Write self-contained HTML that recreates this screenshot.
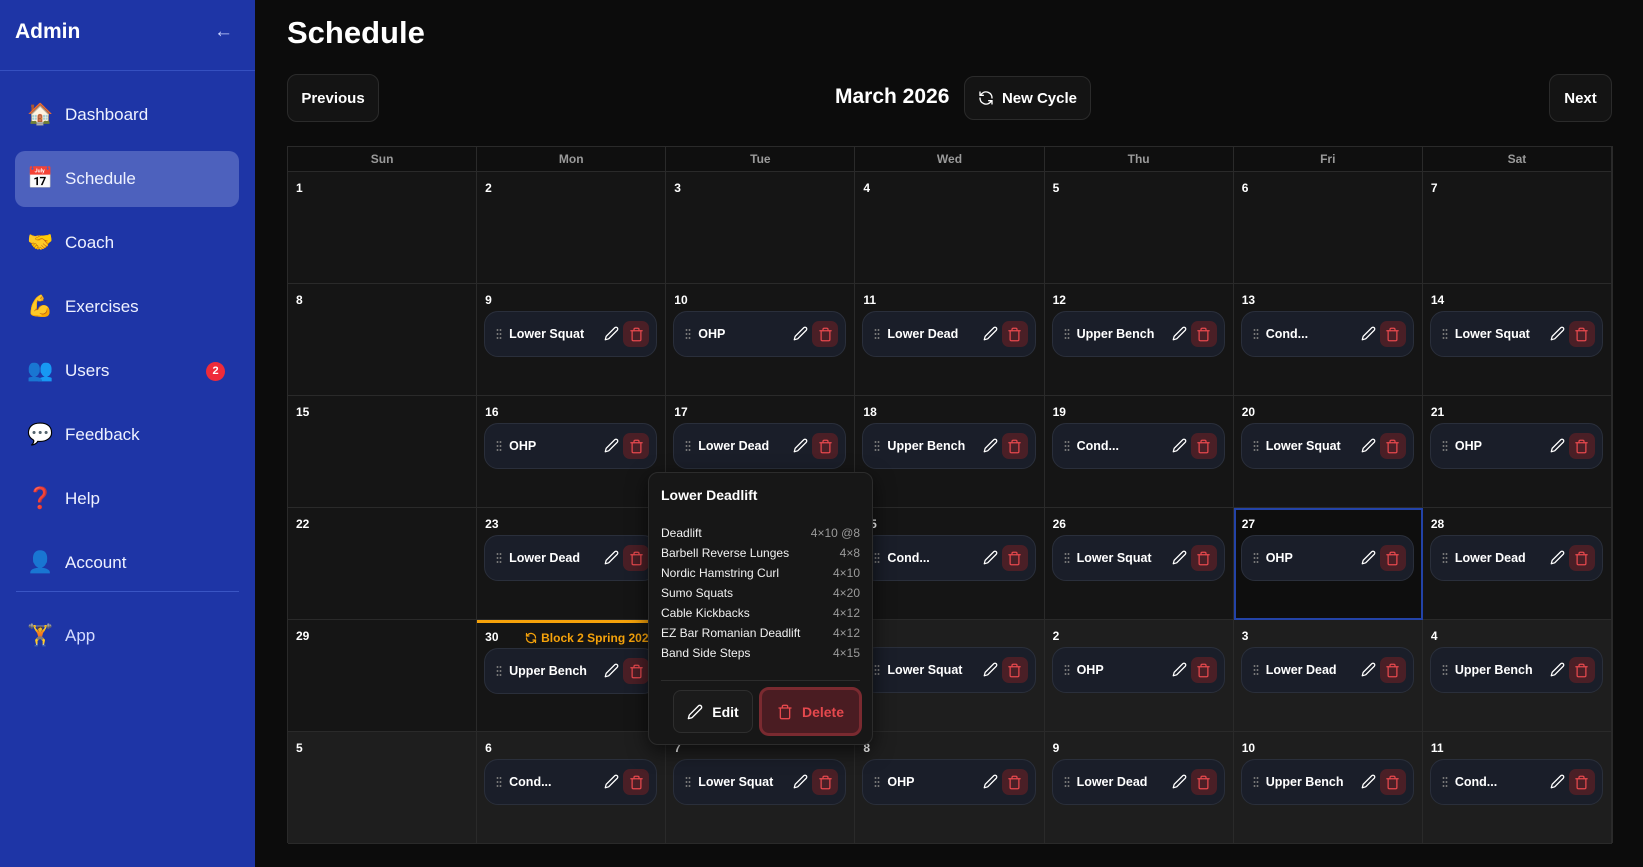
<!DOCTYPE html>
<html><head><meta charset="utf-8"><style>
*{box-sizing:border-box;margin:0;padding:0}
body{width:1643px;height:867px;overflow:hidden;background:#0c0c0c;font-family:"Liberation Sans","DejaVu Sans",sans-serif;color:#fff;position:relative}
.sb{position:absolute;left:0;top:0;width:255px;height:867px;background:#1e35a6}
.sb h1{position:absolute;left:15px;top:20px;font-size:21px;font-weight:bold}
.sb .arr{position:absolute;left:214px;top:21px;font-size:19px;color:#c9d2ff}
.sb .sep{position:absolute;left:0;width:255px;height:1px;background:#3550c0}
.nav{position:absolute;left:15px;width:224px;height:56px;border-radius:10px;font-size:17px;color:#eef1ff;display:flex;align-items:center;padding-left:12px}
.nav .ic{width:38px;font-size:21px;font-family:"Noto Color Emoji","DejaVu Sans",sans-serif}
.nav.act{background:#4d61bd}
.badge{position:absolute;right:14px;top:19px;width:19px;height:19px;border-radius:50%;background:#ef2b3a;color:#fff;font-size:11px;font-weight:bold;text-align:center;line-height:19px}
.title{position:absolute;left:287px;top:15px;font-size:31px;font-weight:bold}
.btn{position:absolute;border:1px solid #2b2b2b;background:#141414;border-radius:10px;font-size:15px;font-weight:bold;display:flex;align-items:center;justify-content:center;color:#fff}
.cal{position:absolute;left:287px;top:146px;width:1326px;height:697px;display:grid;grid-template-columns:repeat(7,1fr);grid-template-rows:25px repeat(6,112px);border:1px solid #2a2a2a;background:#141414}
.hd{background:#0f0f0f;border-right:1px solid #2a2a2a;border-bottom:1px solid #2a2a2a;color:#9a9a9a;font-size:12px;font-weight:bold;text-align:center;line-height:24px}
.c{position:relative;border-right:1px solid #2a2a2a;border-bottom:1px solid #2a2a2a;background:#151515}
.c.o{background:#1e1e1e}
.c.t{background:#0e0e0e;outline:2px solid #2343a8;outline-offset:-2px}
.c.blk{border-top:3px solid #f5a20a}
.n{position:absolute;left:8px;top:9px;font-size:12px;font-weight:bold;color:#fff}
.ch{position:absolute;left:7px;right:8px;top:27px;height:46px;border-radius:14px;background:#1a1e29;border:1px solid #2a2f3b}
.ch .d{position:absolute;left:11px;top:16px;width:6px;height:12px;background-image:radial-gradient(circle,#777 0.8px,transparent 1.1px);background-size:3px 4px}
.ch .l{position:absolute;left:24px;top:15px;font-size:12.5px;font-weight:bold;color:#fff;white-space:nowrap}
.ch .p{position:absolute;right:37px;top:14px}
.ch .tr{position:absolute;right:7px;top:9px;width:26px;height:26px;border-radius:7px;background:#4a1f26;display:flex;align-items:center;justify-content:center}
.blab{position:absolute;left:48px;top:8px;font-size:12px;font-weight:bold;color:#f5a20a;white-space:nowrap;display:flex;align-items:center;gap:4px}
.pop{position:absolute;left:648px;top:472px;width:225px;height:273px;background:#171717;border:1px solid #2c2c2c;border-radius:10px;box-shadow:0 6px 20px rgba(0,0,0,.6)}
.pop h3{position:absolute;left:12px;top:14px;font-size:14px;font-weight:bold}
.pop .rows{position:absolute;left:12px;right:12px;top:50px}
.pop .r{display:flex;justify-content:space-between;font-size:12px;height:20px;line-height:20px;color:#f2f2f2}
.pop .r span:last-child{color:#9a9a9a}
.pop .dv{position:absolute;left:12px;right:12px;top:207px;height:1px;background:#2c2c2c}
</style></head><body>
<div class="sb">
<h1>Admin</h1><div class="arr">←</div>
<div class="sep" style="top:70px"></div>
<div class="nav" style="top:87px"><span class="ic">🏠</span>Dashboard</div>
<div class="nav act" style="top:151px"><span class="ic">📅</span>Schedule</div>
<div class="nav" style="top:215px"><span class="ic">🤝</span>Coach</div>
<div class="nav" style="top:279px"><span class="ic">💪</span>Exercises</div>
<div class="nav" style="top:343px"><span class="ic">👥</span>Users<span class="badge">2</span></div>
<div class="nav" style="top:407px"><span class="ic">💬</span>Feedback</div>
<div class="nav" style="top:471px"><span class="ic">❓</span>Help</div>
<div class="nav" style="top:535px"><span class="ic">👤</span>Account</div>
<div class="sep" style="top:591px;left:16px;width:223px;background:#3a55c4"></div>
<div class="nav" style="top:608px;color:#d5dcff"><span class="ic">🏋️</span>App</div>
</div>

<div class="title">Schedule</div>
<div class="btn" style="left:287px;top:74px;width:92px;height:48px">Previous</div>
<div style="position:absolute;left:835px;top:85px;font-size:21px;font-weight:bold">March 2026</div>
<div class="btn" style="left:964px;top:76px;width:127px;height:44px;gap:8px"><svg width="16" height="16" viewBox="0 0 24 24" fill="none" stroke="#fff" stroke-width="2" stroke-linecap="round" stroke-linejoin="round"><path d="M21 12a9 9 0 0 0-15.5-6.3L3 8"/><path d="M3 3v5h5"/><path d="M3 12a9 9 0 0 0 15.5 6.3L21 16"/><path d="M16 16h5v5"/></svg>New Cycle</div>
<div class="btn" style="left:1549px;top:74px;width:63px;height:48px">Next</div>

<svg width="0" height="0" style="position:absolute"><defs>
<symbol id="pen" viewBox="0 0 24 24"><path d="M21.2 6.8a2.8 2.8 0 0 0-4-4L3.8 16.2a2 2 0 0 0-.5.9L2 22l4.9-1.3a2 2 0 0 0 .9-.5Z" fill="none" stroke="#fff" stroke-width="2" stroke-linejoin="round"/></symbol>
<symbol id="tr" viewBox="0 0 24 24"><g fill="none" stroke="#e5484d" stroke-width="2" stroke-linecap="round" stroke-linejoin="round"><path d="M3 6h18"/><path d="M19 6v14a2 2 0 0 1-2 2H7a2 2 0 0 1-2-2V6"/><path d="M8 6V4a2 2 0 0 1 2-2h4a2 2 0 0 1 2 2v2"/></g></symbol>
</defs></svg>

<div class="cal">
<div class="hd">Sun</div><div class="hd">Mon</div><div class="hd">Tue</div><div class="hd">Wed</div><div class="hd">Thu</div><div class="hd">Fri</div><div class="hd">Sat</div>

<div class="c"><span class="n">1</span></div><div class="c"><span class="n">2</span></div><div class="c"><span class="n">3</span></div><div class="c"><span class="n">4</span></div><div class="c"><span class="n">5</span></div><div class="c"><span class="n">6</span></div><div class="c"><span class="n">7</span></div>

<div class="c"><span class="n">8</span></div>
<div class="c"><span class="n">9</span><div class="ch"><i class="d"></i><span class="l">Lower Squat</span><svg class="p" width="15" height="15"><use href="#pen"/></svg><span class="tr"><svg width="15" height="15"><use href="#tr"/></svg></span></div></div>
<div class="c"><span class="n">10</span><div class="ch"><i class="d"></i><span class="l">OHP</span><svg class="p" width="15" height="15"><use href="#pen"/></svg><span class="tr"><svg width="15" height="15"><use href="#tr"/></svg></span></div></div>
<div class="c"><span class="n">11</span><div class="ch"><i class="d"></i><span class="l">Lower Dead</span><svg class="p" width="15" height="15"><use href="#pen"/></svg><span class="tr"><svg width="15" height="15"><use href="#tr"/></svg></span></div></div>
<div class="c"><span class="n">12</span><div class="ch"><i class="d"></i><span class="l">Upper Bench</span><svg class="p" width="15" height="15"><use href="#pen"/></svg><span class="tr"><svg width="15" height="15"><use href="#tr"/></svg></span></div></div>
<div class="c"><span class="n">13</span><div class="ch"><i class="d"></i><span class="l">Cond...</span><svg class="p" width="15" height="15"><use href="#pen"/></svg><span class="tr"><svg width="15" height="15"><use href="#tr"/></svg></span></div></div>
<div class="c"><span class="n">14</span><div class="ch"><i class="d"></i><span class="l">Lower Squat</span><svg class="p" width="15" height="15"><use href="#pen"/></svg><span class="tr"><svg width="15" height="15"><use href="#tr"/></svg></span></div></div>

<div class="c"><span class="n">15</span></div>
<div class="c"><span class="n">16</span><div class="ch"><i class="d"></i><span class="l">OHP</span><svg class="p" width="15" height="15"><use href="#pen"/></svg><span class="tr"><svg width="15" height="15"><use href="#tr"/></svg></span></div></div>
<div class="c"><span class="n">17</span><div class="ch"><i class="d"></i><span class="l">Lower Dead</span><svg class="p" width="15" height="15"><use href="#pen"/></svg><span class="tr"><svg width="15" height="15"><use href="#tr"/></svg></span></div></div>
<div class="c"><span class="n">18</span><div class="ch"><i class="d"></i><span class="l">Upper Bench</span><svg class="p" width="15" height="15"><use href="#pen"/></svg><span class="tr"><svg width="15" height="15"><use href="#tr"/></svg></span></div></div>
<div class="c"><span class="n">19</span><div class="ch"><i class="d"></i><span class="l">Cond...</span><svg class="p" width="15" height="15"><use href="#pen"/></svg><span class="tr"><svg width="15" height="15"><use href="#tr"/></svg></span></div></div>
<div class="c"><span class="n">20</span><div class="ch"><i class="d"></i><span class="l">Lower Squat</span><svg class="p" width="15" height="15"><use href="#pen"/></svg><span class="tr"><svg width="15" height="15"><use href="#tr"/></svg></span></div></div>
<div class="c"><span class="n">21</span><div class="ch"><i class="d"></i><span class="l">OHP</span><svg class="p" width="15" height="15"><use href="#pen"/></svg><span class="tr"><svg width="15" height="15"><use href="#tr"/></svg></span></div></div>

<div class="c"><span class="n">22</span></div>
<div class="c"><span class="n">23</span><div class="ch"><i class="d"></i><span class="l">Lower Dead</span><svg class="p" width="15" height="15"><use href="#pen"/></svg><span class="tr"><svg width="15" height="15"><use href="#tr"/></svg></span></div></div>
<div class="c"><span class="n">24</span><div class="ch"><i class="d"></i><span class="l">Upper Bench</span><svg class="p" width="15" height="15"><use href="#pen"/></svg><span class="tr"><svg width="15" height="15"><use href="#tr"/></svg></span></div></div>
<div class="c"><span class="n">25</span><div class="ch"><i class="d"></i><span class="l">Cond...</span><svg class="p" width="15" height="15"><use href="#pen"/></svg><span class="tr"><svg width="15" height="15"><use href="#tr"/></svg></span></div></div>
<div class="c"><span class="n">26</span><div class="ch"><i class="d"></i><span class="l">Lower Squat</span><svg class="p" width="15" height="15"><use href="#pen"/></svg><span class="tr"><svg width="15" height="15"><use href="#tr"/></svg></span></div></div>
<div class="c t"><span class="n">27</span><div class="ch"><i class="d"></i><span class="l">OHP</span><svg class="p" width="15" height="15"><use href="#pen"/></svg><span class="tr"><svg width="15" height="15"><use href="#tr"/></svg></span></div></div>
<div class="c"><span class="n">28</span><div class="ch"><i class="d"></i><span class="l">Lower Dead</span><svg class="p" width="15" height="15"><use href="#pen"/></svg><span class="tr"><svg width="15" height="15"><use href="#tr"/></svg></span></div></div>

<div class="c"><span class="n">29</span></div>
<div class="c blk"><span class="n" style="top:7px">30</span><span class="blab"><svg width="12" height="12" viewBox="0 0 24 24" fill="none" stroke="#f5a20a" stroke-width="2.5" stroke-linecap="round"><path d="M21 12a9 9 0 0 0-15.5-6.3L3 8"/><path d="M3 3v5h5"/><path d="M3 12a9 9 0 0 0 15.5 6.3L21 16"/><path d="M16 16h5v5"/></svg>Block 2 Spring 2026</span><div class="ch" style="top:25px"><i class="d"></i><span class="l">Upper Bench</span><svg class="p" width="15" height="15"><use href="#pen"/></svg><span class="tr"><svg width="15" height="15"><use href="#tr"/></svg></span></div></div>
<div class="c"><span class="n">31</span><div class="ch"><i class="d"></i><span class="l">Cond...</span><svg class="p" width="15" height="15"><use href="#pen"/></svg><span class="tr"><svg width="15" height="15"><use href="#tr"/></svg></span></div></div>
<div class="c o"><span class="n">1</span><div class="ch"><i class="d"></i><span class="l">Lower Squat</span><svg class="p" width="15" height="15"><use href="#pen"/></svg><span class="tr"><svg width="15" height="15"><use href="#tr"/></svg></span></div></div>
<div class="c o"><span class="n">2</span><div class="ch"><i class="d"></i><span class="l">OHP</span><svg class="p" width="15" height="15"><use href="#pen"/></svg><span class="tr"><svg width="15" height="15"><use href="#tr"/></svg></span></div></div>
<div class="c o"><span class="n">3</span><div class="ch"><i class="d"></i><span class="l">Lower Dead</span><svg class="p" width="15" height="15"><use href="#pen"/></svg><span class="tr"><svg width="15" height="15"><use href="#tr"/></svg></span></div></div>
<div class="c o"><span class="n">4</span><div class="ch"><i class="d"></i><span class="l">Upper Bench</span><svg class="p" width="15" height="15"><use href="#pen"/></svg><span class="tr"><svg width="15" height="15"><use href="#tr"/></svg></span></div></div>

<div class="c o"><span class="n">5</span></div>
<div class="c o"><span class="n">6</span><div class="ch"><i class="d"></i><span class="l">Cond...</span><svg class="p" width="15" height="15"><use href="#pen"/></svg><span class="tr"><svg width="15" height="15"><use href="#tr"/></svg></span></div></div>
<div class="c o"><span class="n">7</span><div class="ch"><i class="d"></i><span class="l">Lower Squat</span><svg class="p" width="15" height="15"><use href="#pen"/></svg><span class="tr"><svg width="15" height="15"><use href="#tr"/></svg></span></div></div>
<div class="c o"><span class="n">8</span><div class="ch"><i class="d"></i><span class="l">OHP</span><svg class="p" width="15" height="15"><use href="#pen"/></svg><span class="tr"><svg width="15" height="15"><use href="#tr"/></svg></span></div></div>
<div class="c o"><span class="n">9</span><div class="ch"><i class="d"></i><span class="l">Lower Dead</span><svg class="p" width="15" height="15"><use href="#pen"/></svg><span class="tr"><svg width="15" height="15"><use href="#tr"/></svg></span></div></div>
<div class="c o"><span class="n">10</span><div class="ch"><i class="d"></i><span class="l">Upper Bench</span><svg class="p" width="15" height="15"><use href="#pen"/></svg><span class="tr"><svg width="15" height="15"><use href="#tr"/></svg></span></div></div>
<div class="c o"><span class="n">11</span><div class="ch"><i class="d"></i><span class="l">Cond...</span><svg class="p" width="15" height="15"><use href="#pen"/></svg><span class="tr"><svg width="15" height="15"><use href="#tr"/></svg></span></div></div>
</div>

<div class="pop">
<h3>Lower Deadlift</h3>
<div class="rows">
<div class="r"><span>Deadlift</span><span>4×10 @8</span></div>
<div class="r"><span>Barbell Reverse Lunges</span><span>4×8</span></div>
<div class="r"><span>Nordic Hamstring Curl</span><span>4×10</span></div>
<div class="r"><span>Sumo Squats</span><span>4×20</span></div>
<div class="r"><span>Cable Kickbacks</span><span>4×12</span></div>
<div class="r"><span>EZ Bar Romanian Deadlift</span><span>4×12</span></div>
<div class="r"><span>Band Side Steps</span><span>4×15</span></div>
</div>
<div class="dv"></div>
<div style="position:absolute;left:24px;top:217px;width:80px;height:43px;border:1px solid #2e2e2e;border-radius:8px;background:#1b1b1b;display:flex;align-items:center;justify-content:center;gap:9px;font-size:14px;font-weight:bold"><svg width="16" height="16"><use href="#pen"/></svg>Edit</div>
<div style="position:absolute;left:110px;top:214px;width:103px;height:49px;border:3px solid #7a2a30;border-radius:10px;background:#4a1c22;display:flex;align-items:center;justify-content:center;gap:9px;font-size:14px;font-weight:bold;color:#e5484d"><svg width="16" height="16"><use href="#tr"/></svg>Delete</div>
</div>
</body></html>
